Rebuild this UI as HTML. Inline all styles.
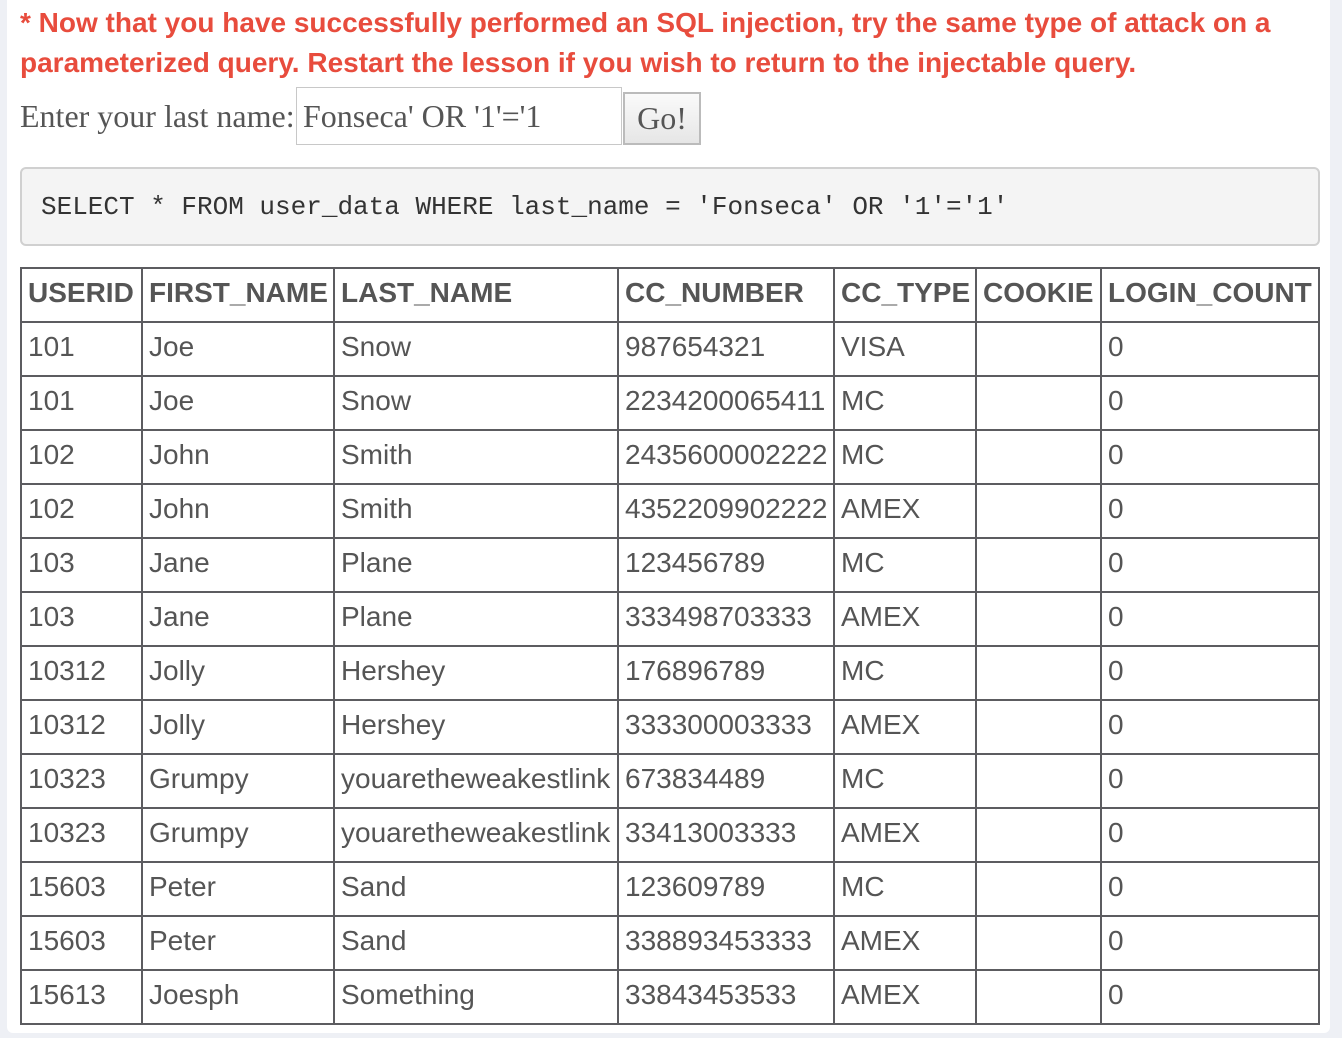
<!DOCTYPE html>
<html><head><meta charset="utf-8"><style>
html,body{margin:0;padding:0;}
body{width:1342px;height:1038px;background:#eef0f5;position:relative;overflow:hidden;font-family:"Liberation Sans",Arial,sans-serif;}
.panel{position:absolute;left:7px;top:-10px;width:1323px;height:1043px;background:#fff;border-radius:6px;}
.msg{position:absolute;left:20px;top:3px;width:1310px;color:#e84c3d;font-weight:bold;font-size:28px;line-height:40px;}
.lbl{position:absolute;left:20px;top:98px;font-family:"Liberation Serif",serif;font-size:32px;color:#555;}
.inp{position:absolute;left:296px;top:87px;width:326px;height:58px;border:1px solid #c8c8c8;box-sizing:border-box;font-family:"Liberation Serif",serif;font-size:32px;color:#555;padding:10px 0 0 6px;}
.btn{position:absolute;left:623px;top:92px;width:78px;height:53px;border:2px solid #bbb;box-sizing:border-box;background:linear-gradient(#fafafa,#e6e6e6);font-family:"Liberation Serif",serif;font-size:32px;color:#555;text-align:center;line-height:49px;}
.code{position:absolute;left:20px;top:167px;width:1300px;height:79px;box-sizing:border-box;border:2px solid #d0d0d0;border-radius:6px;background:#f4f4f4;font-family:"Liberation Mono",monospace;font-size:26px;color:#333;padding:0 0 0 19px;line-height:76px;white-space:pre;}
table{position:absolute;left:20px;top:267px;border-collapse:collapse;table-layout:fixed;width:1298px;}
td,th{border:2px solid #5c5c60;height:52px;padding:0 0 4px 6px;box-sizing:border-box;font-size:28px;color:#555;text-align:left;white-space:nowrap;overflow:hidden;}
td,th{height:54px;}
th{font-weight:bold;}
</style></head><body>
<div class="panel"></div>
<div class="msg">* Now that you have successfully performed an SQL injection, try the same type of attack on a parameterized query. Restart the lesson if you wish to return to the injectable query.</div>
<div class="lbl">Enter your last name:</div>
<div class="inp">Fonseca' OR '1'='1</div>
<div class="btn">Go!</div>
<div class="code">SELECT * FROM user_data WHERE last_name = 'Fonseca' OR '1'='1'</div>
<table>
<colgroup><col style="width:121px"><col style="width:192px"><col style="width:284px"><col style="width:216px"><col style="width:142px"><col style="width:125px"><col style="width:218px"></colgroup>
<tr><th>USERID</th><th>FIRST_NAME</th><th>LAST_NAME</th><th>CC_NUMBER</th><th>CC_TYPE</th><th>COOKIE</th><th>LOGIN_COUNT</th></tr>
<tr><td>101</td><td>Joe</td><td>Snow</td><td>987654321</td><td>VISA</td><td></td><td>0</td></tr>
<tr><td>101</td><td>Joe</td><td>Snow</td><td>2234200065411</td><td>MC</td><td></td><td>0</td></tr>
<tr><td>102</td><td>John</td><td>Smith</td><td>2435600002222</td><td>MC</td><td></td><td>0</td></tr>
<tr><td>102</td><td>John</td><td>Smith</td><td>4352209902222</td><td>AMEX</td><td></td><td>0</td></tr>
<tr><td>103</td><td>Jane</td><td>Plane</td><td>123456789</td><td>MC</td><td></td><td>0</td></tr>
<tr><td>103</td><td>Jane</td><td>Plane</td><td>333498703333</td><td>AMEX</td><td></td><td>0</td></tr>
<tr><td>10312</td><td>Jolly</td><td>Hershey</td><td>176896789</td><td>MC</td><td></td><td>0</td></tr>
<tr><td>10312</td><td>Jolly</td><td>Hershey</td><td>333300003333</td><td>AMEX</td><td></td><td>0</td></tr>
<tr><td>10323</td><td>Grumpy</td><td>youaretheweakestlink</td><td>673834489</td><td>MC</td><td></td><td>0</td></tr>
<tr><td>10323</td><td>Grumpy</td><td>youaretheweakestlink</td><td>33413003333</td><td>AMEX</td><td></td><td>0</td></tr>
<tr><td>15603</td><td>Peter</td><td>Sand</td><td>123609789</td><td>MC</td><td></td><td>0</td></tr>
<tr><td>15603</td><td>Peter</td><td>Sand</td><td>338893453333</td><td>AMEX</td><td></td><td>0</td></tr>
<tr><td>15613</td><td>Joesph</td><td>Something</td><td>33843453533</td><td>AMEX</td><td></td><td>0</td></tr>
</table>
</body></html>
